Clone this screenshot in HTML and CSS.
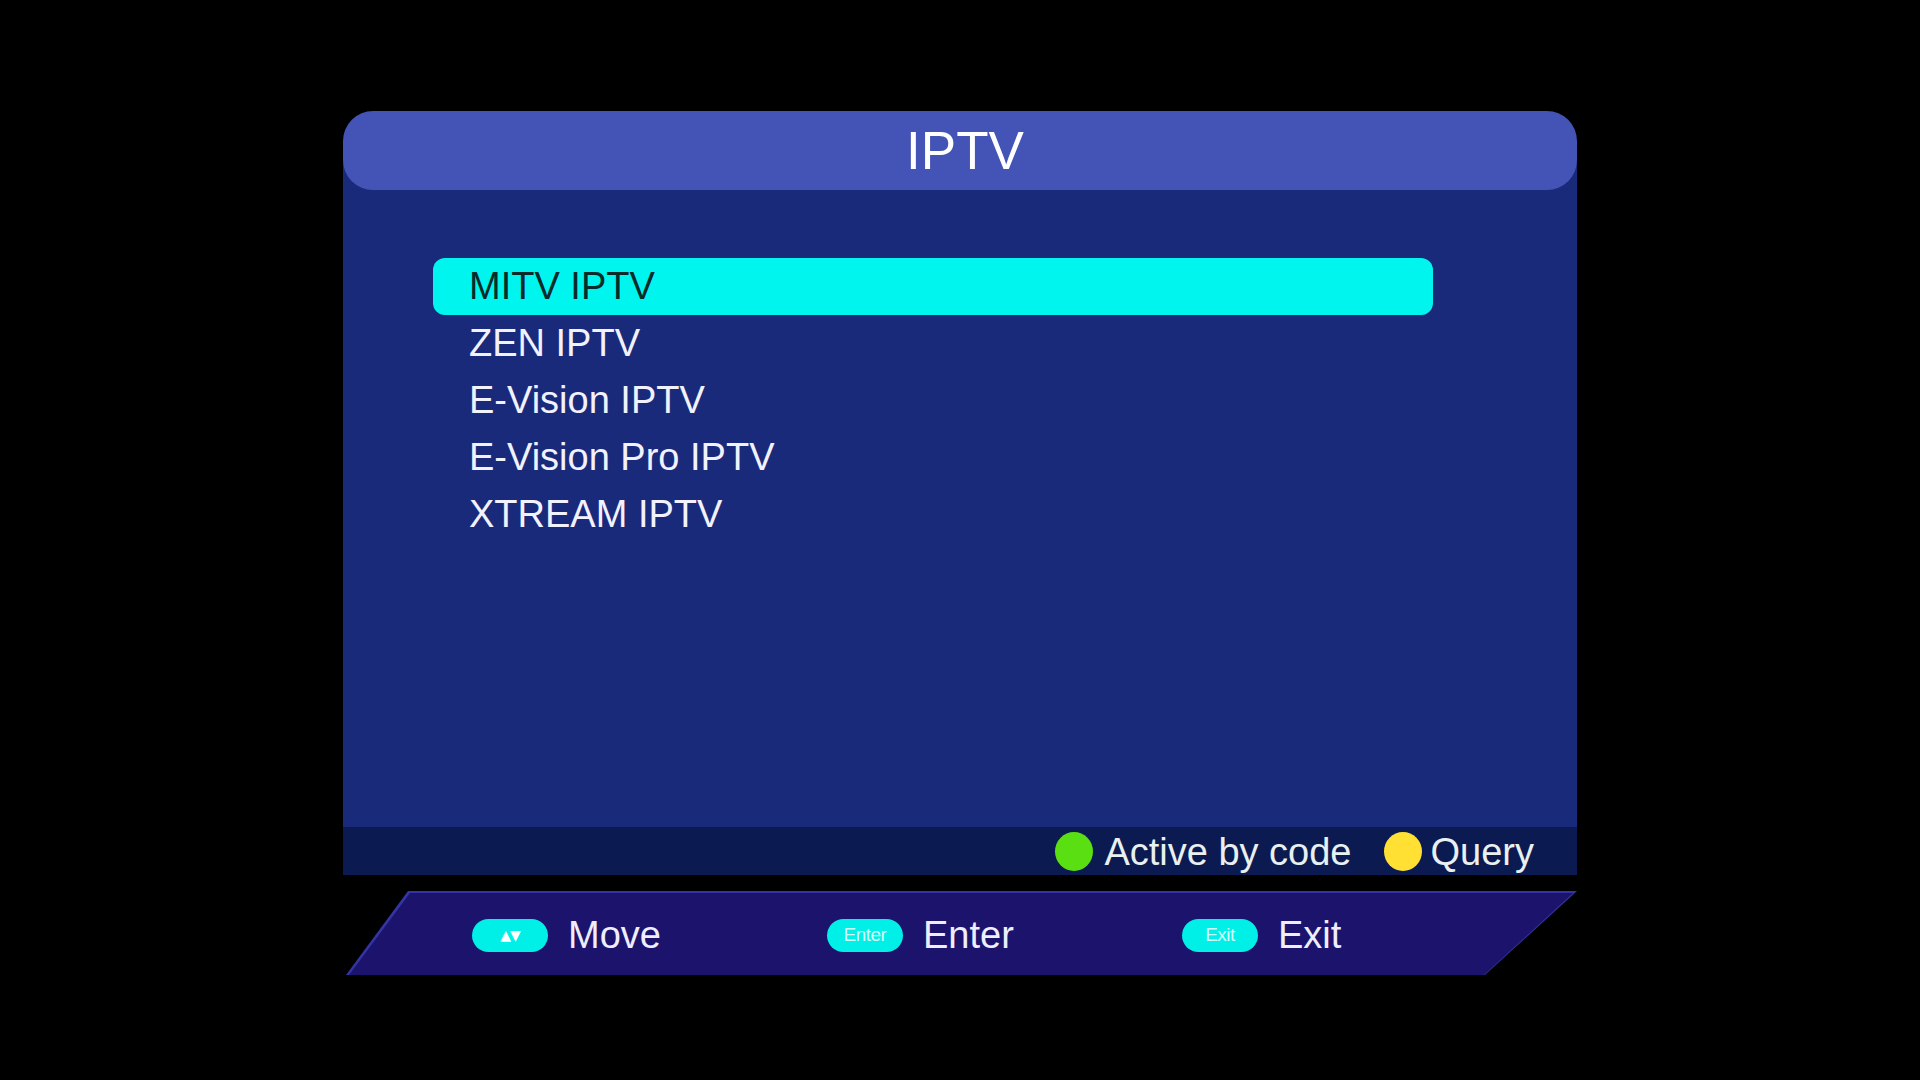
FILE: index.html
```html
<!DOCTYPE html>
<html lang="en">
<head>
<meta charset="utf-8">
<title>IPTV</title>
<link rel="stylesheet" href="styles.css">
</head>
<body>
<div class="screen">
  <div class="panel">
    <div class="header"><span class="title">IPTV</span></div>
    <div class="content">
      <ul class="menu">
        <li class="item selected">MITV IPTV</li>
        <li class="item">ZEN IPTV</li>
        <li class="item">E-Vision IPTV</li>
        <li class="item">E-Vision Pro IPTV</li>
        <li class="item">XTREAM IPTV</li>
      </ul>
    </div>
    <div class="hints">
      <span class="dot green"></span><span class="hint-text">Active by code</span>
      <span class="dot yellow"></span><span class="hint-text">Query</span>
    </div>
  </div>
  <div class="bottombar">
    <div class="bar-fill">
      <div class="key-group">
        <span class="pill"><span class="pill-arrows">▲▼</span></span><span class="key-text">Move</span>
      </div>
      <div class="key-group">
        <span class="pill"><span class="pill-label">Enter</span></span><span class="key-text">Enter</span>
      </div>
      <div class="key-group last">
        <span class="pill"><span class="pill-label">Exit</span></span><span class="key-text">Exit</span>
      </div>
    </div>
  </div>
</div>
</body>
</html>
```

FILE: styles.css
```css
html, body {
  margin: 0;
  padding: 0;
  background: #000;
}
body {
  width: 1920px;
  height: 1080px;
  overflow: hidden;
  font-family: "Liberation Sans", Arial, sans-serif;
}
.screen {
  padding-top: 111px;
  padding-left: 343px;
}
.panel {
  width: 1234px;
  background: linear-gradient(to bottom, transparent 50px, #1a2a7a 50px);
}
.header {
  height: 79px;
  border-radius: 30px;
  background: #4353b6;
  display: flex;
  align-items: center;
  justify-content: center;
  padding-left: 10px;
  box-sizing: border-box;
}
.title {
  color: #ffffff;
  font-size: 53px;
  line-height: 1;
}
.content {
  height: 637px;
  padding-top: 68px;
  box-sizing: border-box;
}
.menu {
  list-style: none;
  margin: 0 0 0 90px;
  padding: 0;
  width: 1000px;
}
.item {
  height: 57px;
  line-height: 57px;
  padding-left: 36px;
  box-sizing: border-box;
  font-size: 38px;
  color: #f2f2ff;
  border-radius: 12px;
}
.item.selected {
  height: 57px;
  background: #00f5ee;
  color: #072a2a;
}
.hints {
  height: 48px;
  background: #0b1a50;
  display: flex;
  align-items: center;
  justify-content: flex-end;
  padding-right: 43px;
}
.dot {
  width: 38px;
  height: 39px;
  border-radius: 50%;
  flex: none;
}
.dot.green {
  background: #5ae012;
  margin-right: 11px;
}
.dot.yellow {
  background: #ffe033;
  margin-left: 32px;
  margin-right: 9px;
}
.hint-text {
  font-size: 38px;
  color: #e8f0f0;
  line-height: 48px;
  padding-top: 2px;
}
.bottombar {
  margin-top: 16px;
  margin-left: 3px;
  width: 1231px;
  height: 84px;
  background: #3434a4;
  clip-path: polygon(62px 0, 100% 0, 1139px 100%, 0 100%);
  padding-top: 2px;
  box-sizing: border-box;
}
.bar-fill {
  height: 82px;
  background: #1c146c;
  clip-path: polygon(64px 0, 1227px 0, 1138px 100%, 3px 100%);
  display: flex;
  align-items: center;
  padding-left: 126px;
  padding-top: 2px;
  box-sizing: border-box;
}
.key-group {
  width: 355px;
  display: flex;
  align-items: center;
  flex: none;
}
.key-group.last {
  width: auto;
}
.pill {
  width: 76px;
  height: 33px;
  border-radius: 17px;
  background: #00efe6;
  display: flex;
  align-items: center;
  justify-content: center;
  flex: none;
  margin-right: 20px;
}
.pill-arrows {
  color: #ffffff;
  font-family: "DejaVu Sans", sans-serif;
  font-size: 14px;
  letter-spacing: -1px;
}
.pill-label {
  color: #d0fffa;
  font-family: "Liberation Sans Narrow", "Liberation Sans", sans-serif;
  font-size: 19px;
  letter-spacing: -0.5px;
}
.key-text {
  font-size: 38px;
  color: #eeeeff;
  line-height: 1;
}
```
